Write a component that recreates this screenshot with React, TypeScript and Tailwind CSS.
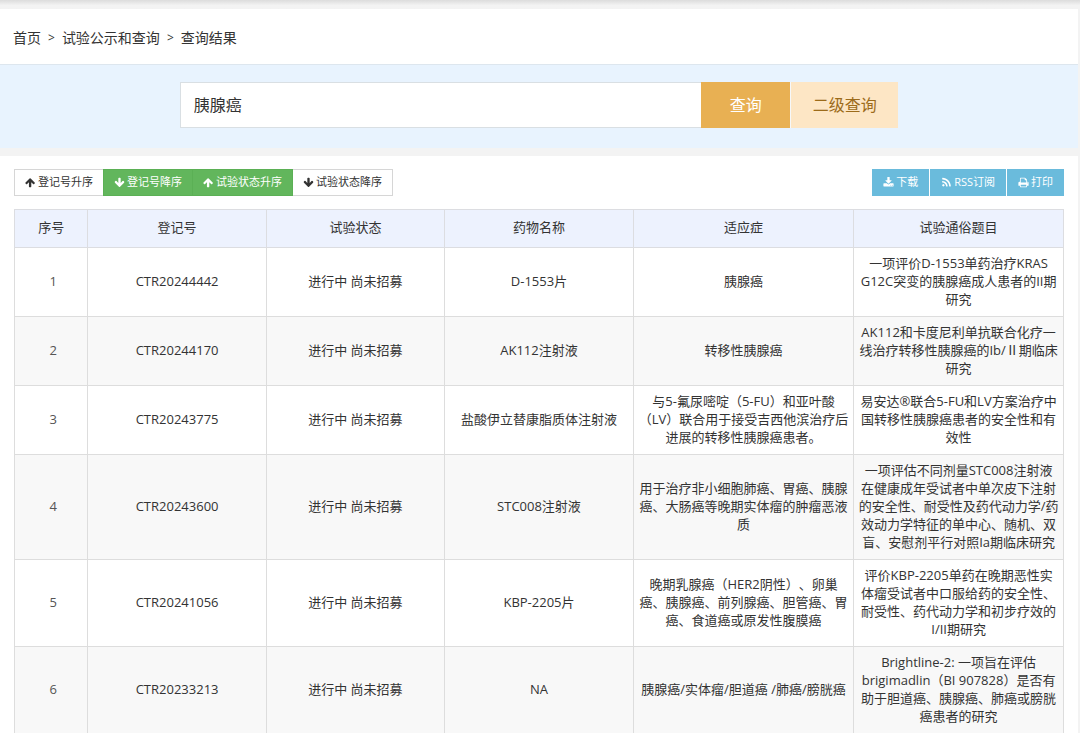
import React, { useState } from 'react';

interface Trial {
  regNo: string;
  status: string;
  drug: string;
  indication: string;
  title: string;
}

const trials: Trial[] = [
  {
    regNo: 'CTR20244442',
    status: '进行中 尚未招募',
    drug: 'D-1553片',
    indication: '胰腺癌',
    title: '一项评价D-1553单药治疗KRAS G12C突变的胰腺癌成人患者的II期研究',
  },
  {
    regNo: 'CTR20244170',
    status: '进行中 尚未招募',
    drug: 'AK112注射液',
    indication: '转移性胰腺癌',
    title: 'AK112和卡度尼利单抗联合化疗一线治疗转移性胰腺癌的Ib/Ⅱ期临床研究',
  },
  {
    regNo: 'CTR20243775',
    status: '进行中 尚未招募',
    drug: '盐酸伊立替康脂质体注射液',
    indication: '与5-氟尿嘧啶（5-FU）和亚叶酸（LV）联合用于接受吉西他滨治疗后进展的转移性胰腺癌患者。',
    title: '易安达®联合5-FU和LV方案治疗中国转移性胰腺癌患者的安全性和有效性',
  },
  {
    regNo: 'CTR20243600',
    status: '进行中 尚未招募',
    drug: 'STC008注射液',
    indication: '用于治疗非小细胞肺癌、胃癌、胰腺癌、大肠癌等晚期实体瘤的肿瘤恶液质',
    title: '一项评估不同剂量STC008注射液\n在健康成年受试者中单次皮下注射\n的安全性、耐受性及药代动力学/药\n效动力学特征的单中心、随机、双\n盲、安慰剂平行对照Ia期临床研究',
  },
  {
    regNo: 'CTR20241056',
    status: '进行中 尚未招募',
    drug: 'KBP-2205片',
    indication: '晚期乳腺癌（HER2阴性）、卵巢\n癌、胰腺癌、前列腺癌、胆管癌、胃\n癌、食道癌或原发性腹膜癌',
    title: '评价KBP-2205单药在晚期恶性实\n体瘤受试者中口服给药的安全性、\n耐受性、药代动力学和初步疗效的\nI/II期研究',
  },
  {
    regNo: 'CTR20233213',
    status: '进行中 尚未招募',
    drug: 'NA',
    indication: '胰腺癌/实体瘤/胆道癌 /肺癌/膀胱癌',
    title: 'Brightline-2: 一项旨在评估brigimadlin（BI 907828）是否有助于胆道癌、胰腺癌、肺癌或膀胱癌患者的研究',
  },
];

const columns = [
  { label: '序号', width: 'w-[7%]' },
  { label: '登记号', width: 'w-[17%]' },
  { label: '试验状态', width: 'w-[17%]' },
  { label: '药物名称', width: 'w-[18%]' },
  { label: '适应症', width: 'w-[21%]' },
  { label: '试验通俗题目', width: 'w-[20%]' },
];

const icons = {
  up: 'M1611 971q0 51-37 90l-75 75q-38 38-91 38-54 0-90-38l-294-293v704q0 52-37.5 84.5t-90.5 32.5h-128q-53 0-90.5-32.5t-37.5-84.5v-704l-294 293q-36 38-90 38t-90-38l-75-75q-38-38-38-90 0-53 38-91l651-651q35-37 90-37 54 0 91 37l651 651q37 39 37 91z',
  down: 'M1675 832q0 53-37 90l-651 652q-39 37-91 37-53 0-90-37l-651-652q-38-36-38-90 0-53 38-91l74-75q39-37 91-37 53 0 90 37l294 294v-704q0-52 38-90t90-38h128q52 0 90 38t38 90v704l294-294q37-37 90-37 52 0 91 37l75 75q37 39 37 91z',
  download: 'M1344 1344q0-26-19-45t-45-19-45 19-19 45 19 45 45 19 45-19 19-45zm256 0q0-26-19-45t-45-19-45 19-19 45 19 45 45 19 45-19 19-45zm128-224v320q0 40-28 68t-68 28h-1472q-40 0-68-28t-28-68v-320q0-40 28-68t68-28h465l135 136q58 56 136 56t136-56l136-136h464q40 0 68 28t28 68zm-325-569q17 41-14 70l-448 448q-18 19-45 19t-45-19l-448-448q-31-29-14-70 17-39 59-39h256v-448q0-26 19-45t45-19h256q26 0 45 19t19 45v448h256q42 0 59 39z',
  rss: 'M576 1344q0 80-56 136t-136 56-136-56-56-136 56-136 136-56 136 56 56 136zm512 123q2 28-17 48-18 21-47 21h-135q-25 0-43-16.5t-20-41.5q-22-229-184.5-391.5t-391.5-184.5q-25-2-41.5-20t-16.5-43v-135q0-29 21-47 17-17 43-17h5q160 13 306 80.5t259 181.5q114 113 181.5 259t80.5 306zm512 2q2 27-18 47-18 20-46 20h-143q-26 0-44.5-17.5t-19.5-42.5q-12-215-101-408.5t-231.5-336-336-231.5-408.5-102q-25-1-42.5-19.5t-17.5-43.5v-143q0-28 20-46 18-18 44-18h3q262 13 501.5 120t425.5 294q187 186 294 425.5t120 501.5z',
  print: 'M448 1536h896v-256h-896v256zm0-640h896v-384h-160q-40 0-68-28t-28-68v-160h-640v640zm1152 64q0-26-19-45t-45-19-45 19-19 45 19 45 45 19 45-19 19-45zm128 0v416q0 13-9.5 22.5t-22.5 9.5h-224v160q0 40-28 68t-68 28h-960q-40 0-68-28t-28-68v-160h-224q-13 0-22.5-9.5t-9.5-22.5v-416q0-79 56.5-135.5t135.5-56.5h64v-544q0-40 28-68t68-28h672q40 0 88 20t76 48l152 152q28 28 48 76t20 88v256h64q79 0 135.5 56.5t56.5 135.5z',
};

type IconName = keyof typeof icons;

const Icon: React.FC<{ name: IconName }> = ({ name }) => (
  <svg viewBox="0 0 1792 1792" className="w-[11px] h-[11px] shrink-0" fill="currentColor" aria-hidden="true">
    <path d={icons[name]} />
  </svg>
);

const sortButtons: { label: string; icon: IconName; active: boolean }[] = [
  { label: '登记号升序', icon: 'up', active: false },
  { label: '登记号降序', icon: 'down', active: true },
  { label: '试验状态升序', icon: 'up', active: true },
  { label: '试验状态降序', icon: 'down', active: false },
];

const actions: { label: string; icon: IconName }[] = [
  { label: '下载', icon: 'download' },
  { label: 'RSS订阅', icon: 'rss' },
  { label: '打印', icon: 'print' },
];

const cell = 'px-1 pt-1.5 pb-2 border border-[#dddddd]';

const App: React.FC = () => {
  const [keyword, setKeyword] = useState('胰腺癌');

  return (
    <div className="min-h-screen bg-[#f3f3f3] pr-0.5 text-[#333] font-['Open_Sans','Noto_Sans_CJK_SC',sans-serif] [text-spacing-trim:space-all]">
      <div className="h-[9px] -mr-0.5 bg-linear-to-b from-[#dcdcdc] to-[#f3f3f3] to-60%" />

      {/* Breadcrumb */}
      <nav className="flex items-center gap-[7px] h-14 px-[13px] pt-0.5 bg-white border-b border-[#dde6ee] text-sm">
        <a href="#">首页</a>
        <span className="text-xs">&gt;</span>
        <a href="#">试验公示和查询</a>
        <span className="text-xs">&gt;</span>
        <span>查询结果</span>
      </nav>

      {/* Search */}
      <form className="bg-[#e8f3fe] pt-[17px] pb-5" onSubmit={(e) => e.preventDefault()}>
        <div className="flex w-2/3 h-[46px] mx-auto text-base">
          <input
            type="text"
            aria-label="关键词"
            value={keyword}
            onChange={(e) => setKeyword(e.target.value)}
            className="flex-1 min-w-0 px-[13px] bg-white border border-r-0 border-[#d9dfe3] outline-none"
          />
          <button type="submit" className="w-[89px] bg-[#e8b053] text-white">查询</button>
          <button type="button" className="w-[108px] border-l border-[#f6f8fa] bg-[#fde6c5] text-[#9c6b1a]">二级查询</button>
        </div>
      </form>

      <main className="mt-2 px-3.5 pt-[13px] bg-white">
        {/* Toolbar */}
        <div className="flex items-center justify-between mb-[13px] text-[11px]">
          <div className="flex">
            {sortButtons.map((b, i) => (
              <button
                key={b.label}
                className={`flex items-center gap-0.5 h-[27px] px-2.5 border ${i > 0 ? '-ml-px' : ''} ${
                  b.active ? 'relative bg-[#62b65c] border-[#5bb055] text-white' : 'bg-white border-[#d6d6d6]'
                }`}
              >
                <Icon name={b.icon} />
                {b.label}
              </button>
            ))}
          </div>
          <div className="flex gap-px">
            {actions.map((a) => (
              <button key={a.label} className="flex items-center gap-0.5 h-[27px] px-[11px] bg-[#6abbdc] text-white">
                <Icon name={a.icon} />
                {a.label}
              </button>
            ))}
          </div>
        </div>

        {/* Results */}
        <table className="w-full table-fixed border-collapse text-[13px] leading-[18px] text-center whitespace-pre-line">
          <thead>
            <tr className="bg-[#edf2fe]">
              {columns.map((c) => (
                <th key={c.label} className={`${c.width} pt-2 pb-[11px] border border-[#dcdde1] font-normal`}>
                  {c.label}
                </th>
              ))}
            </tr>
          </thead>
          <tbody>
            {trials.map((t, i) => (
              <tr key={t.regNo} className="odd:bg-white even:bg-[#f8f8f8]">
                <td className="pl-2 pr-1 pt-1.5 pb-2 border border-[#dddddd] text-[#555]">{i + 1}</td>
                <td className={cell}>{t.regNo}</td>
                <td className={cell}>{t.status}</td>
                <td className={cell}>{t.drug}</td>
                <td className={cell}>{t.indication}</td>
                <td className={cell}>{t.title}</td>
              </tr>
            ))}
          </tbody>
        </table>
      </main>
    </div>
  );
};

export default App;
